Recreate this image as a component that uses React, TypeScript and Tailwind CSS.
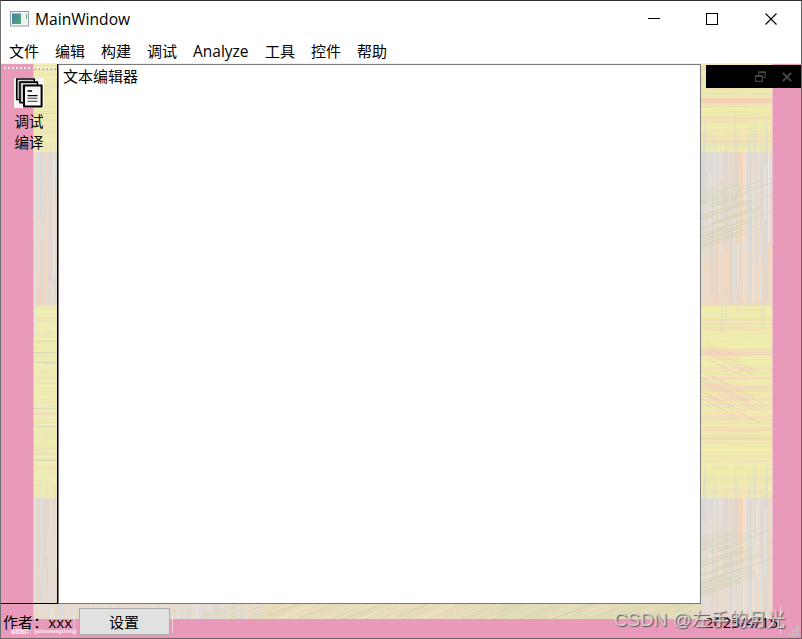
import React from "react";

const ui = "font-['Open_Sans','Noto_Sans_CJK_SC',sans-serif]";
const song = "font-['Liberation_Sans','Noto_Sans_CJK_SC',sans-serif]";

function makeRandom(seed: number) {
  let s = seed;
  return () => {
    s = (s * 16807) % 2147483647;
    return s / 2147483647;
  };
}

type Area = { x: number; y: number; w: number; h: number; seed: number };

function VerticalStreaks({ x, y, w, h, seed, rise = 40 }: Area & { rise?: number }) {
  const r = makeRandom(seed);
  const colors = ["#d6d7d8", "#dedede", "#f7d8bc", "#ebe9e6", "#f3dcc6", "#f6d6ba"];
  return (
    <g>
      {Array.from({ length: Math.round(w * 1.5) }, (_, i) => {
        const up = r() < 0.25;
        const cx = x + 1 + r() * (w - 2);
        const top = up ? y - r() * rise : y - 4 + (r() < 0.5 ? r() * h * 0.6 : 0);
        const bottom = Math.min(y + h, top + h * (0.35 + r()));
        const half = 0.5 + r() * 0.8;
        const color = up ? colors[i % 2] : colors[Math.floor(r() * 6)];
        const tip = up ? 25 : 8;
        return (
          <path key={i} d={`M${cx} ${top}L${cx + half} ${top + tip}V${bottom - 6}L${cx} ${bottom}L${cx - half} ${bottom - 6}V${top + tip}Z`} fill={color} opacity={0.25 + r() * 0.4} />
        );
      })}
    </g>
  );
}

function HorizontalLines({ x, y, w, h, seed, strength }: Area & { strength: number }) {
  const r = makeRandom(seed);
  const colors = ["#f3cfba", "#f4d6ba", "#f1f2a0", "#e2e2c0", "#f4d2c6"];
  return (
    <g>
      {Array.from({ length: Math.round(h * 0.85) }, (_, i) => {
        const full = r() < 0.7;
        const start = full ? 0 : r() * w * 0.5;
        return (
          <rect key={i} x={x + start} y={y + r() * (h - 2)} width={(w - start) * (full ? 1 : 0.4 + r() * 0.6)} height={0.6 + r() * 0.8} fill={colors[Math.floor(r() * 5)]} opacity={strength * (0.4 + r() * 0.6)} />
        );
      })}
    </g>
  );
}

function Diagonals({ x, y, w, h, seed, count, dx, dy, colors, opacity = 0.6 }: Area & { count: number; dx: number; dy: number; colors: string[]; opacity?: number }) {
  const r = makeRandom(seed);
  return (
    <g opacity={opacity}>
      {Array.from({ length: count }, (_, i) => {
        const sx = x + r() * w;
        const sy = y + r() * h;
        const k = 0.5 + r() * 0.6;
        return <line key={i} x1={sx} y1={sy} x2={sx + dx * k} y2={sy + dy * k} stroke={colors[i % colors.length]} strokeWidth={0.5 + r() * 0.5} />;
      })}
    </g>
  );
}

function Backdrop() {
  const olive = ["#cdd4aa", "#d5d9b9", "#cbd2ae"];
  return (
    <svg className="absolute inset-0 h-full w-full" viewBox="1 64 800 574" preserveAspectRatio="none" aria-hidden="true">
      <defs>
        <clipPath id="right"><rect x="701" y="64" width="71" height="555" /></clipPath>
        <clipPath id="left"><rect x="34" y="64" width="24" height="555" /></clipPath>
        <clipPath id="foot"><rect x="34" y="603" width="668" height="16" /></clipPath>
      </defs>
      <rect x="1" y="64" width="800" height="574" fill="#e99aba" />
      <rect x="33" y="64" width="740" height="555" fill="#eebfc4" />
      <g clipPath="url(#right)">
        <rect x="701" y="64" width="71" height="555" fill="#efedae" />
        <rect x="701" y="152" width="71" height="154" fill="#e5dbd2" />
        <rect x="701" y="498" width="71" height="121" fill="#e5dbd2" />
        <rect x="732" y="152" width="14" height="90" fill="#f6d6b8" opacity=".8" />
        <rect x="732" y="498" width="14" height="60" fill="#f6d6b8" opacity=".8" />
        <path d="M701 245l8 20 7-40 8 25 9-20 7 30 8-15 8 20 16-25v65h-71z" fill="#f4d7bd" opacity=".7" />
        <HorizontalLines x={701} y={64} w={71} h={88} seed={31} strength={0.75} />
        <rect x="701" y="98" width="71" height="5" fill="#f4d2b4" />
        <HorizontalLines x={701} y={306} w={71} h={190} seed={77} strength={0.75} />
        <Diagonals x={692} y={340} w={20} h={65} seed={22} count={30} dx={55} dy={27} colors={["#f4c4c4", "#f2c6c5"]} />
        <VerticalStreaks x={701} y={152} w={71} h={153} seed={19} />
        <VerticalStreaks x={701} y={498} w={71} h={121} seed={19} />
        <path d="M710 172v58M768.5 152v90M738 245v45M765 165v55M710 520v58M757 500v80M765 510v65" stroke="#f0f0f0" strokeWidth=".9" opacity=".8" />
        <path d="M722 295v38M726 285v36M738 280v32M763 285v45" stroke="#d9dacd" strokeWidth="1.4" opacity=".6" />
        <Diagonals x={680} y={195} w={35} h={66} seed={51} count={36} dx={58} dy={-21} colors={olive} opacity={0.7} />
        <Diagonals x={712} y={205} w={22} h={30} seed={58} count={8} dx={48} dy={-17} colors={olive} />
        <Diagonals x={680} y={542} w={35} h={66} seed={51} count={36} dx={58} dy={-21} colors={olive} opacity={0.7} />
        <Diagonals x={712} y={552} w={22} h={30} seed={58} count={8} dx={48} dy={-17} colors={olive} />
      </g>
      <g clipPath="url(#left)">
        <rect x="34" y="64" width="24" height="555" fill="#efedb4" />
        <rect x="34" y="152" width="24" height="154" fill="#e2dbd4" />
        <rect x="34" y="498" width="24" height="121" fill="#e2d9d1" />
        <HorizontalLines x={34} y={64} w={24} h={88} seed={45} strength={0.3} />
        <HorizontalLines x={34} y={306} w={24} h={190} seed={88} strength={0.3} />
        <VerticalStreaks x={34} y={152} w={24} h={153} seed={13} rise={14} />
        <VerticalStreaks x={34} y={498} w={24} h={121} seed={17} rise={34} />
        <path d="M38 306L40 268L43 306Z" fill="#f2d3b7" opacity=".8" />
        <path d="M34 113.5h24M34 341.5h24M34 352.5h24M34 362.5h24M34 408.5h24M34 426.5h24M34 460.5h24" stroke="#d0d3bb" strokeWidth=".8" />
        <path d="M34.5 153V337M34.5 500V619" stroke="#e8e2dc" />
      </g>
      <g clipPath="url(#foot)">
        <rect x="34" y="603" width="230" height="16" fill="#e6dcd2" />
        <rect x="262" y="603" width="440" height="16" fill="#eddcc0" />
        <rect x="500" y="603" width="202" height="16" fill="#dcdbb3" opacity=".6" />
        <VerticalStreaks x={34} y={596} w={230} h={34} seed={29} rise={0} />
        <Diagonals x={200} y={612} w={500} h={20} seed={101} count={200} dx={58} dy={-23} colors={["#cfd7a9", "#f0d8bb", "#d3dab0", "#ece5ca"]} opacity={0.8} />
      </g>
      <path d="M772.5 64V619" stroke="#eebfca" />
    </svg>
  );
}

function TitleBar() {
  return (
    <header className="flex h-[37px] shrink-0 items-center bg-white pl-[9px]">
      <svg width="20" height="16" viewBox="0 0 20 16" className="mb-px shrink-0" aria-hidden="true">
        <defs>
          <linearGradient id="pane" x1="0" y1="0" x2="1" y2="1">
            <stop offset="0" stopColor="#477fa8" />
            <stop offset="1" stopColor="#4fac72" />
          </linearGradient>
        </defs>
        <rect x=".5" y=".5" width="18" height="14.5" fill="#f3f5f6" stroke="#929ca3" />
        <rect x="2" y="2.5" width="9" height="10.5" fill="url(#pane)" />
        <rect x="12" y="2" width="5" height="11" fill="#edf1f2" />
        <path d="M16.5 3v5" stroke="#6fb28e" />
      </svg>
      <h1 className="mb-[2px] ml-[5px] text-[15.6px] leading-5 text-black">MainWindow</h1>
      <svg width="130" height="14" viewBox="0 0 130 14" className="mb-px ml-auto mr-[23px]" fill="none" stroke="#000" aria-hidden="true">
        <path d="M0 6.5h12" shapeRendering="crispEdges" />
        <rect x="58.5" y="1.5" width="11" height="11" shapeRendering="crispEdges" />
        <path d="M117.5 1.5l11 11m0-11l-11 11" strokeWidth="1.1" />
      </svg>
    </header>
  );
}

function MenuBar() {
  const items = ["文件", "编辑", "构建", "调试", "Analyze", "工具", "控件", "帮助"];
  return (
    <nav className="flex h-[26px] shrink-0 gap-4 border-b border-[#f0f0f0] bg-white pl-2 text-[15px] leading-[26px] text-black">
      {items.map((item) => (
        <span key={item} className={item === "Analyze" ? "w-14 whitespace-nowrap text-[15.5px]" : "w-[30px] whitespace-nowrap"}>{item}</span>
      ))}
    </nav>
  );
}

function DocumentsIcon() {
  return (
    <svg width="30" height="30" viewBox="0 0 30 30" className="bg-[#f5f5f5]" fill="none" stroke="#000" strokeWidth="1.7" strokeLinejoin="round" aria-hidden="true">
      <path d="M2.8 1h17.4v20.5H2.8z" fill="#f5f5f5" />
      <path d="M4.7 21V3.2H20" stroke="#aaa" strokeWidth="1.2" />
      <path d="M6 4.2h17.4v20.4H6z" fill="#f5f5f5" />
      <path d="M8 24V6h15" stroke="#aaa" strokeWidth="1.2" />
      <path d="M10 7.6h17.6v21H10z" fill="#f8f8f8" strokeWidth="2" />
      <path d="M13.5 13h4.5M13.5 17.7h10" strokeWidth="1.3" />
      <path d="M13.5 20.3h10M13.5 23.3h10" stroke="#333" strokeWidth="1.1" />
    </svg>
  );
}

function SideBar() {
  return (
    <aside className={`flex w-[57px] shrink-0 flex-col items-center border-r border-b border-black text-[14.5px] leading-[21px] text-black ${song}`}>
      <div className="flex w-full justify-between pt-[3px] pr-0.5 pl-[3px]">
        {Array.from({ length: 13 }, (_, i) => (
          <i key={i} className="size-[2px] bg-[#eeeeee] shadow-[1px_1px_0_#c9aaa9]" />
        ))}
      </div>
      <div className="mt-[9px]"><DocumentsIcon /></div>
      <span className="mt-[4px]">调试</span>
      <span>编译</span>
    </aside>
  );
}

function DockTitle() {
  return (
    <div className="flex h-[23px] items-center justify-end gap-4 bg-black pr-[9px]">
      <svg width="11" height="11" viewBox="0 0 11 11" fill="none" stroke="#434343" strokeWidth="1.2" aria-hidden="true">
        <path d="M3.6 4V.8h6.7v5.7H7.5M3.6 1.7h6.7M.6 4.6h6.7v5.7H.6zM.6 5.5h6.7" />
      </svg>
      <svg width="10" height="10" viewBox="0 0 10 10" stroke="#484848" strokeWidth="1.8" aria-hidden="true">
        <path d="M.8.8l8.4 8.4m0-8.4L.8 9.2" />
      </svg>
    </div>
  );
}

function StatusBar() {
  return (
    <footer className="relative flex h-[34px] shrink-0 text-[15px] text-black">
      <span className="w-[74px] whitespace-nowrap pt-[8px] pl-[2px] leading-5 tracking-[0.1px]">作者：xxx</span>
      <span className="absolute top-[25px] left-[10px] whitespace-nowrap font-['Liberation_Sans','Noto_Sans_CJK_SC',sans-serif] text-[4.6px] leading-[5px] font-bold text-white/80">编辑图片：(yuhenmengcheng)</span>
      <div className="mt-[11px] -ml-px h-5 w-px bg-white/40" />
      <button className="mt-1 ml-[4px] h-[27px] w-[91px] border border-[#adadad] bg-[#e1e1e1] pr-px text-[15px] leading-[26px]">设置</button>
      <div className="mt-[12px] ml-[2px] h-[17px] w-px bg-white/50" />
      <time className="ml-auto w-[75px] pt-[8px] text-[15px] leading-5 whitespace-nowrap tracking-[0.25px]">2023/4/15</time>
      <div className="mt-[2px] h-[28px] w-px bg-white/50" />
      <svg width="11" height="11" viewBox="0 0 11 11" className="mt-[21px] mr-[2px] ml-[7px]" fill="#bfbfbf" aria-hidden="true">
        <path d="M8 0h3v3H8zM4 4h3v3H4zM8 4h3v3H8zM0 8h3v3H0zM4 8h3v3H4zM8 8h3v3H8z" />
      </svg>
      <span className="absolute top-[3px] left-[613px] font-['Liberation_Sans','Noto_Sans_CJK_SC',sans-serif] text-[18.5px] leading-[26px] tracking-[0.25px] whitespace-nowrap text-[#e1dddd]/85 [text-shadow:1px_1px_1px_#555]">CSDN @左手的月光</span>
    </footer>
  );
}

export default function App() {
  return (
    <div className={`flex h-[639px] w-[802px] flex-col overflow-hidden border border-t-[#302c2f] border-r-[#656565] border-b-[#656565] border-l-[#707070] bg-white ${ui}`}>
      <TitleBar />
      <MenuBar />
      <main className="relative flex min-h-0 grow flex-col">
        <Backdrop />
        <div className="relative flex h-[540px] shrink-0">
          <SideBar />
          <section className={`w-[643px] shrink-0 border border-[#7a7a7a] bg-white px-1 py-[2px] text-[15px] leading-[19px] text-black ${song}`}>文本编辑器</section>
          <div className="grow pt-px pl-[5px]"><DockTitle /></div>
        </div>
        <StatusBar />
      </main>
    </div>
  );
}
